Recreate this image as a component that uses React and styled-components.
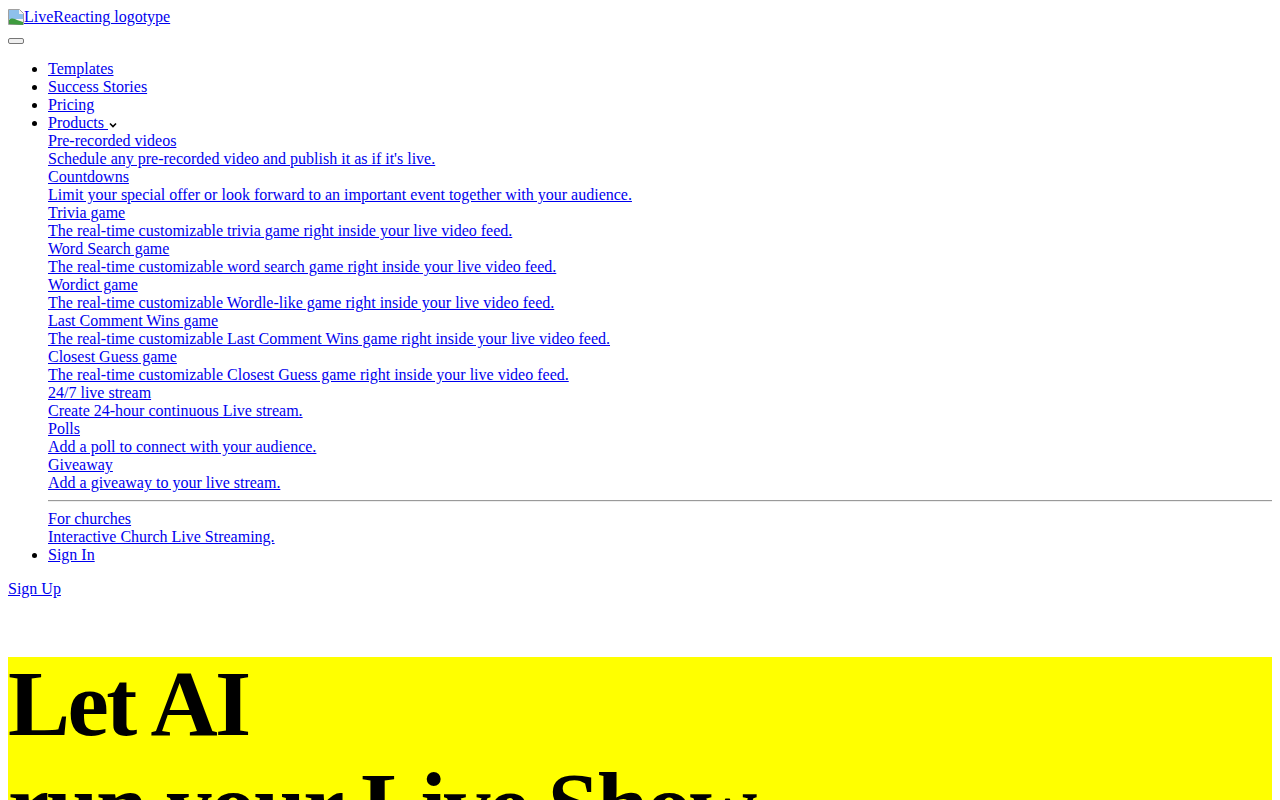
import React from "react";
import styled, { createGlobalStyle } from "styled-components";

const GlobalStyle = createGlobalStyle`
  body {
    margin: 8px;
    font-family: "Liberation Serif", "Times New Roman", serif;
    font-size: 16px;
    color: #000;
    background: #fff;
  }
`;

const Header = styled.header`
  display: block;
`;

const LogoLink = styled.a`
  color: #0000ee;
  text-decoration: underline;
`;

const BrokenImage = styled.svg`
  width: 16px;
  height: 16px;
  vertical-align: -3px;
`;

const MenuToggle = styled.button`
  display: block;
  margin: 12px 0 0;
  padding: 1px 6px;
  height: 6px;
  width: 16px;
  border: 1px solid #767676;
  border-radius: 2px;
  background: #efefef;
`;

const NavList = styled.ul`
  margin: 16px 0;
  padding-left: 40px;
  list-style: disc;
`;

const NavLink = styled.a`
  color: #0000ee;
  text-decoration: underline;
`;

const Chevron = styled.svg`
  width: 10px;
  height: 10px;
  vertical-align: -2px;
`;

const SubMenu = styled.div`
  display: block;
`;

const SubItem = styled.a`
  display: block;
  color: #0000ee;
  text-decoration: underline;
`;

const SubTitle = styled.div``;

const SubText = styled.div``;

const Divider = styled.hr`
  margin: 8px 0;
  border: 0;
  border-top: 1px solid #9a9a9a;
  border-bottom: 1px solid #eeeeee;
`;

const SignUp = styled.a`
  color: #0000ee;
  text-decoration: underline;
`;

const Hero = styled.section`
  display: flow-root;
  margin-top: 59px;
  background: #ffff00;
`;

const Headline = styled.h1`
  margin: -4px 0 0;
  font-family: "Liberation Serif", "Times New Roman", serif;
  font-weight: 700;
  font-size: 93px;
  line-height: 102px;
  letter-spacing: -2.5px;
`;

const products = [
  ["Pre-recorded videos", "Schedule any pre-recorded video and publish it as if it's live."],
  ["Countdowns", "Limit your special offer or look forward to an important event together with your audience."],
  ["Trivia game", "The real-time customizable trivia game right inside your live video feed."],
  ["Word Search game", "The real-time customizable word search game right inside your live video feed."],
  ["Wordict game", "The real-time customizable Wordle-like game right inside your live video feed."],
  ["Last Comment Wins game", "The real-time customizable Last Comment Wins game right inside your live video feed."],
  ["Closest Guess game", "The real-time customizable Closest Guess game right inside your live video feed."],
  ["24/7 live stream", "Create 24-hour continuous Live stream."],
  ["Polls", "Add a poll to connect with your audience."],
  ["Giveaway", "Add a giveaway to your live stream."],
];

function App() {
  return (
    <>
      <GlobalStyle />
      <Header>
        <div>
          <LogoLink href="#">
            <BrokenImage viewBox="0 0 16 16">
              <path d="M0.5 0.5h11l4 4v11h-15z" fill="#f4f4f4" stroke="#a0a0a0" />
              <path d="M1 1h10v4h4v5H1z" fill="#8ec0ec" />
              <path d="M1 15v-4c3-3 6-1 8 0l6 2v3z" fill="#3f9b3f" />
            </BrokenImage>
            LiveReacting logotype
          </LogoLink>
        </div>
        <MenuToggle aria-label="menu" />
        <NavList>
          <li><NavLink href="#">Templates</NavLink></li>
          <li><NavLink href="#">Success Stories</NavLink></li>
          <li><NavLink href="#">Pricing</NavLink></li>
          <li>
            <NavLink href="#">
              Products{" "}
            </NavLink>
            <Chevron viewBox="0 0 10 10">
              <path d="M2 3.5l3 3 3-3" fill="none" stroke="#000" strokeWidth="1.6" />
            </Chevron>
            <SubMenu>
              {products.map(([title, text]) => (
                <SubItem href="#" key={title}>
                  <SubTitle>{title}</SubTitle>
                  <SubText>{text}</SubText>
                </SubItem>
              ))}
              <Divider />
              <SubItem href="#">
                <SubTitle>For churches</SubTitle>
                <SubText>Interactive Church Live Streaming.</SubText>
              </SubItem>
            </SubMenu>
          </li>
          <li><NavLink href="#">Sign In</NavLink></li>
        </NavList>
        <SignUp href="#">Sign Up</SignUp>
      </Header>
      <Hero>
        <Headline>
          Let AI
          <br />
          run your Live Show
        </Headline>
      </Hero>
    </>
  );
}

export default App;
